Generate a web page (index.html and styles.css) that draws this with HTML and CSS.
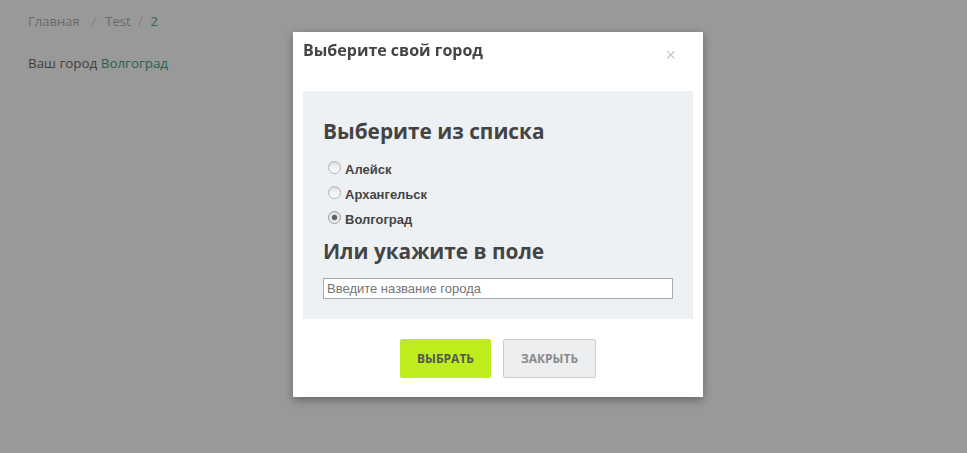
FILE: index.html
```html
<!DOCTYPE html>
<html lang="ru">
<head>
<meta charset="utf-8">
<title>Выберите свой город</title>
<link rel="stylesheet" href="styles.css">
</head>
<body>
<div class="page">
  <nav class="crumbs">
    <a class="crumb crumb-first" href="#">Главная</a><span class="sep">/</span><a class="crumb" href="#">Test</a><span class="sep sep-last">/</span><span class="crumb-current">2</span>
  </nav>
  <p class="city-line">Ваш город <a class="city-link" href="#">Волгоград</a></p>
</div>

<div class="backdrop">
  <div class="modal">
    <div class="modal-header">
      <h3 class="modal-title">Выберите свой город</h3>
      <span class="modal-close">×</span>
    </div>
    <div class="modal-body">
      <h2 class="section-title">Выберите из списка</h2>
      <div class="radio-list">
        <label class="radio-row"><input class="radio" type="radio" name="city"><span class="radio-label">Алейск</span></label>
        <label class="radio-row"><input class="radio" type="radio" name="city"><span class="radio-label">Архангельск</span></label>
        <label class="radio-row"><input class="radio" type="radio" name="city" checked><span class="radio-label">Волгоград</span></label>
      </div>
      <h2 class="section-title section-title-2">Или укажите в поле</h2>
      <input class="city-input" type="text" placeholder="Введите название города">
    </div>
    <div class="modal-footer">
      <button class="btn btn-primary">Выбрать</button>
      <button class="btn btn-secondary">Закрыть</button>
    </div>
  </div>
</div>
</body>
</html>
```

FILE: styles.css
```css
html, body {
  margin: 0;
  padding: 0;
  background: #ffffff;
  font-family: "Open Sans", "Liberation Sans", sans-serif;
}

.page {
  padding: 11px 28px 0;
}

.crumbs {
  font-size: 13px;
  line-height: 20px;
  color: #b0b0b0;
}

.crumb {
  color: #b0b0b0;
  text-decoration: none;
}

.crumb-first {
  margin-right: 3px;
}

.sep {
  color: #d6d6d6;
  padding: 0 9px;
}

.sep-last {
  padding: 0 8px 0 7px;
}

.crumb-current {
  color: #4fa88c;
}

.city-line {
  margin: 22px 0 0;
  font-size: 13.4px;
  line-height: 20px;
  color: #6b6b6b;
}

.city-link {
  color: #46a283;
  text-decoration: none;
}

.backdrop {
  position: fixed;
  inset: 0;
  background: rgba(0, 0, 0, 0.4);
}

.modal {
  position: absolute;
  left: 293px;
  top: 32px;
  width: 410px;
  background: #ffffff;
  box-shadow: 0 3px 9px rgba(0, 0, 0, 0.35);
  display: flex;
  flex-direction: column;
}

.modal-header {
  position: relative;
  height: 59px;
  box-sizing: border-box;
  padding: 8px 10px 0;
}

.modal-title {
  margin: 0;
  font-size: 16px;
  line-height: 20px;
  font-weight: 700;
  color: #444444;
}

.modal-close {
  position: absolute;
  right: 27px;
  top: 11px;
  font-size: 18px;
  line-height: 24px;
  color: #c8c8c8;
  font-family: "Liberation Sans", sans-serif;
}

.modal-body {
  margin: 0 10px;
  background: #edf1f4;
  padding: 25px 20px 20px;
}

.section-title {
  margin: 0;
  font-size: 20.8px;
  line-height: 30px;
  font-weight: 700;
  color: #444444;
}

.section-title-2 {
  margin-top: 4px;
}

.radio-list {
  display: flex;
  flex-direction: column;
  padding-top: 11px;
}

.radio-row {
  display: flex;
  align-items: center;
  height: 25px;
  font-family: "Liberation Sans", Arial, sans-serif;
  font-size: 13px;
  font-weight: 700;
  color: #444444;
}

.radio {
  appearance: none;
  -webkit-appearance: none;
  box-sizing: border-box;
  width: 13px;
  height: 13px;
  margin: 0 4px 0 5px;
  border-radius: 50%;
  border: 1px solid #b4b4b4;
  background: linear-gradient(#e4e4e4, #fdfdfd);
  box-shadow: inset 0 1px 1px rgba(0, 0, 0, 0.08);
  position: relative;
  top: -2px;
}

.radio:checked {
  background: radial-gradient(circle, #5a5a5a 0, #6a6a6a 2.4px, #e6e6e6 3.2px, #f4f4f4 100%);
  border-color: #9c9c9c;
}

.city-input {
  display: block;
  box-sizing: border-box;
  width: 350px;
  height: 21px;
  margin-top: 12px;
  padding: 1px 3px;
  border: 1px solid #a9a9a9;
  background: #ffffff;
  font-family: "Liberation Sans", Arial, sans-serif;
  font-size: 13px;
  color: #333;
  outline: none;
}

.city-input::placeholder {
  color: #757575;
}

.modal-footer {
  display: flex;
  justify-content: center;
  gap: 12px;
  padding: 20px 0 19px;
}

.btn {
  height: 39px;
  box-sizing: border-box;
  border-radius: 2px;
  font-family: "Open Sans", sans-serif;
  font-size: 12px;
  font-weight: 700;
  text-transform: uppercase;
  cursor: pointer;
}

.btn-primary {
  width: 91px;
  background: #bdec1f;
  border: 1px solid #bdec1f;
  color: #555555;
}

.btn-secondary {
  width: 93px;
  background: #eceef0;
  border: 1px solid #cacccf;
  color: #8a8a8a;
}
```
